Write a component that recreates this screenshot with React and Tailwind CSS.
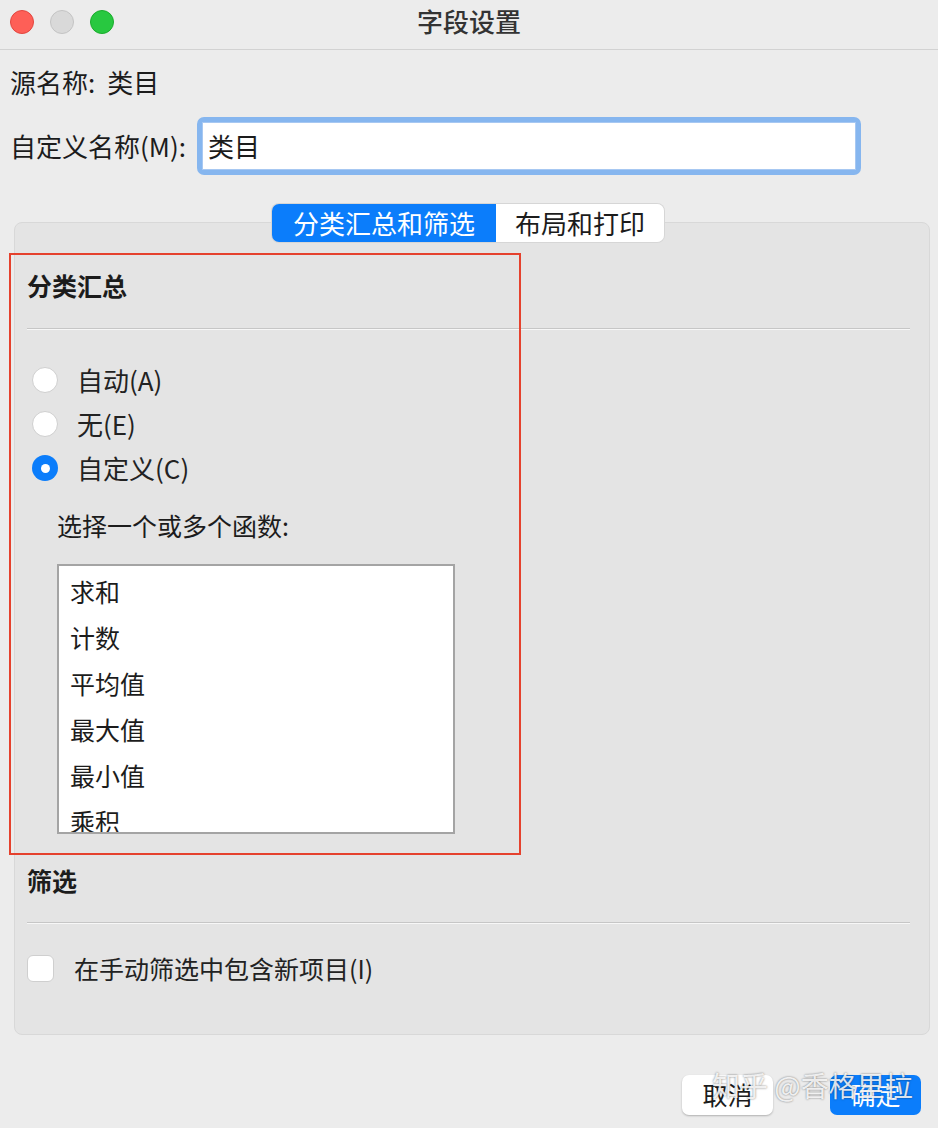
import React from 'react';

const font = { fontFamily: '"Noto Sans CJK SC", "Noto Sans", sans-serif' };

const functions = ["求和", "计数", "平均值", "最大值", "最小值", "乘积"];

function Radio({ checked, label }) {
  return (
    <div className="flex items-center h-[44px] ml-[5px] gap-[19px]">
      {checked ? (
        <div className="w-[26px] h-[26px] rounded-full bg-[#0b7dfb] flex items-center justify-center">
          <div className="w-[9px] h-[9px] rounded-full bg-white" />
        </div>
      ) : (
        <div className="w-[26px] h-[26px] rounded-full bg-white border border-[#cfcfcf]" />
      )}
      <span className="text-[26px] leading-[36px] text-[#222]">{label}</span>
    </div>
  );
}

function Separator() {
  return <div className="border-t border-[#c6c6c6] border-b border-b-[#f7f7f7]" />;
}

export default function App() {
  return (
    <div className="relative w-[938px] h-[1128px] bg-[#ececec] overflow-hidden text-[#1c1c1c]" style={font}>
      {/* title bar */}
      <div className="h-[50px] grid grid-cols-[1fr_auto_1fr] items-center border-b border-[#d2d2d2]">
        <div className="flex items-center gap-[16px] pl-[10px] pb-[6px]">
          <div className="w-[24px] h-[24px] rounded-full bg-[#fe5f57] border border-[#e2463f]" />
          <div className="w-[24px] h-[24px] rounded-full bg-[#d9d9d9] border border-[#c4c4c4]" />
          <div className="w-[24px] h-[24px] rounded-full bg-[#28c840] border border-[#1aac2c]" />
        </div>
        <div className="text-[26px] leading-[36px] font-medium text-[#333] pb-[8px]">字段设置</div>
        <div />
      </div>

      <div className="px-[10px]">
        <div className="mt-[14px] text-[26px] leading-[36px]">
          源名称:<span className="ml-[12px]">类目</span>
        </div>

        <div className="mt-[17px] flex items-center">
          <span className="text-[26px] leading-[36px] w-[187px]">自定义名称(M):</span>
          <div className="w-[664px] h-[58px] rounded-[7px] bg-[#86b6ef] p-[5px]">
            <div className="h-full bg-white border border-[#a7c8f2] flex items-center pl-[5px]">
              <span className="text-[26px] leading-[36px]">类目</span>
            </div>
          </div>
        </div>
      </div>

      {/* tabs */}
      <div className="relative z-10 mt-[29px] flex justify-center pr-[2px]">
        <div className="flex h-[38px] rounded-[7px] overflow-hidden shadow-[0_0_0_1px_#d6d6d6]">
          <div className="w-[224px] bg-[#0b7dfb] text-white flex items-center justify-center text-[26px] leading-[36px]">分类汇总和筛选</div>
          <div className="w-[168px] bg-white flex items-center justify-center text-[26px] leading-[36px]">布局和打印</div>
        </div>
      </div>

      {/* panel */}
      <div className="-mt-[20px] ml-[14px] w-[916px] rounded-[8px] bg-[#e4e4e4] border border-[#d8d8d8] pl-[12px] pr-[19px] pt-[44px] pb-[44px]">
        <div className="text-[25px] leading-[36px] font-bold">分类汇总</div>
        <div className="mt-[25px]">
          <Separator />
        </div>
        <div className="mt-[28px]">
          <Radio label="自动(A)" />
          <Radio label="无(E)" />
          <Radio checked label="自定义(C)" />
        </div>
        <div className="mt-[17px] ml-[30px] text-[25px] leading-[36px]">选择一个或多个函数:</div>
        <div className="mt-[21px] ml-[30px] w-[398px] h-[270px] bg-white border-2 border-[#a4a4a4] overflow-hidden pt-[2px]">
          {functions.map((f) => (
            <div key={f} className="h-[46px] flex items-center pl-[11px] text-[25px] leading-[36px]">
              {f}
            </div>
          ))}
        </div>
        <div className="mt-[28px] text-[25px] leading-[36px] font-bold">筛选</div>
        <div className="mt-[24px]">
          <Separator />
        </div>
        <div className="mt-[22px] flex items-center h-[44px] gap-[20px]">
          <div className="w-[27px] h-[27px] rounded-[6px] bg-white border border-[#cfcfcf]" />
          <span className="text-[25px] leading-[36px] text-[#222]">在手动筛选中包含新项目(I)</span>
        </div>
      </div>

      {/* buttons */}
      <div className="mt-[40px] flex justify-end gap-[57px] pr-[17px]">
        <div className="w-[91px] h-[40px] rounded-[7px] bg-white shadow-[0_1px_2px_rgba(0,0,0,0.25)] flex items-center justify-center text-[25px]">取消</div>
        <div className="w-[91px] h-[40px] rounded-[7px] bg-[#0b7dfb] text-white flex items-center justify-center text-[25px]">确定</div>
      </div>

      {/* annotation */}
      <div className="absolute left-[9px] top-[253px] w-[512px] h-[602px] border-2 border-[#e5412d] pointer-events-none" />

      {/* watermark */}
      <div className="absolute left-[712px] top-[1065px] text-[28px] leading-[40px] text-white/85 [text-shadow:0_0_2px_rgba(0,0,0,0.55)] whitespace-nowrap pointer-events-none">
        知乎 @香格里拉
      </div>
    </div>
  );
}
